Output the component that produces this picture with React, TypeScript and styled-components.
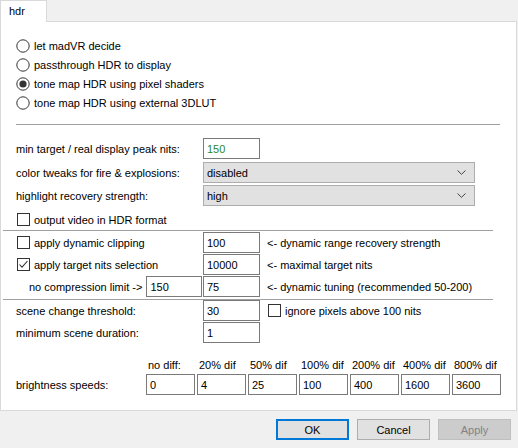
import React from "react";
import styled, { createGlobalStyle, css } from "styled-components";

const GlobalStyle = createGlobalStyle`
  html, body {
    margin: 0;
    padding: 0;
    background: #f0f0f0;
  }
  body {
    font-family: "Liberation Sans", Arial, sans-serif;
    font-size: 11px;
    color: #000;
  }
  * { box-sizing: border-box; }
`;

const Window = styled.div`
  width: 518px;
  height: 448px;
  display: flex;
  flex-direction: column;
  background: #f0f0f0;
  overflow: hidden;
`;

const TabStrip = styled.div`
  height: 21px;
  display: flex;
  align-items: flex-end;
`;

const Tab = styled.div`
  width: 47px;
  height: 22px;
  margin-bottom: -1px;
  position: relative;
  z-index: 1;
  background: #fff;
  border: 1px solid #d9d9d9;
  border-bottom: none;
  padding: 3px 0 0 8px;
  font-size: 11px;
  line-height: 14px;
`;

const Panel = styled.div`
  width: 517px;
  height: 390px;
  background: #fff;
  border: 1px solid #d9d9d9;
  padding-left: 15px;
  display: flex;
  flex-direction: column;
`;

const RadioList = styled.div`
  margin-top: 14px;
  display: flex;
  flex-direction: column;
`;

const OptionRow = styled.div<{ $indent?: number }>`
  height: 19px;
  display: flex;
  align-items: center;
  gap: 4px;
  padding-left: ${(p) => p.$indent ?? 0}px;
  white-space: nowrap;
`;

const Separator = styled.div<{ $wide?: boolean }>`
  height: 1px;
  background: #a0a0a0;
  ${(p) =>
    p.$wide
      ? css`
          margin-left: -13px;
          width: 490px;
        `
      : css`
          width: 484px;
        `}
`;

const FormRow = styled.div<{ $top?: number }>`
  margin-top: ${(p) => p.$top ?? 0}px;
  height: 21px;
  display: grid;
  grid-template-columns: 187px auto 1fr;
  align-items: center;
  white-space: nowrap;
`;

const FieldLabel = styled.div<{ $indent?: number }>`
  display: flex;
  align-items: center;
  padding-left: ${(p) => p.$indent ?? 0}px;
  gap: 4px;
`;

const TextBox = styled.div<{ $width?: number; $green?: boolean }>`
  width: ${(p) => p.$width ?? 57}px;
  height: 21px;
  border: 1px solid #7a7a7a;
  background: #fff;
  padding-left: 3px;
  display: flex;
  align-items: center;
  color: ${(p) => (p.$green ? "#2a8a2a" : "#000")};
`;

const PushRight = styled.div`
  margin-left: auto;
  margin-right: 1px;
`;

const SelectBox = styled.div`
  width: 272px;
  height: 21px;
  border: 1px solid #adadad;
  background: #e1e1e1;
  padding: 0 8px 0 3px;
  display: flex;
  align-items: center;
  justify-content: space-between;
`;

const Hint = styled.div<{ $gap?: number }>`
  padding-left: ${(p) => p.$gap ?? 7}px;
  display: flex;
  align-items: center;
  gap: 4px;
`;

const BoxMark = styled.span`
  width: 13px;
  height: 13px;
  border: 1px solid #333;
  background: #fff;
  flex: none;
  display: inline-flex;
  align-items: center;
  justify-content: center;
`;

const SpeedGrid = styled.div<{ $top?: number; $height: number }>`
  margin-top: ${(p) => p.$top ?? 0}px;
  height: ${(p) => p.$height}px;
  display: grid;
  grid-template-columns: 128px repeat(7, 49px);
  column-gap: 2px;
  align-items: center;
  white-space: nowrap;
`;

const SpeedHead = styled.div`
  padding-left: 2px;
  line-height: 13px;
`;

const SpeedFirst = styled.div`
  margin-right: -2px;
`;

const ButtonBar = styled.div`
  flex: 1;
  display: flex;
  justify-content: flex-end;
  align-items: flex-start;
  gap: 8px;
  padding: 8px 7px 0 0;
`;

const Button = styled.div<{ $variant?: "default" | "normal" | "disabled" }>`
  width: 73px;
  height: 21px;
  display: flex;
  align-items: center;
  justify-content: center;
  background: #e1e1e1;
  border: 1px solid #adadad;
  ${(p) =>
    p.$variant === "default" &&
    css`
      border: 2px solid #0078d7;
    `}
  ${(p) =>
    p.$variant === "disabled" &&
    css`
      background: #cccccc;
      border-color: #bfbfbf;
      color: #838383;
    `}
`;

const Radio = ({ checked }: { checked?: boolean }) => (
  <svg width="14" height="14" viewBox="0 0 14 14" style={{ flex: "none" }}>
    <circle cx="7" cy="7" r="6.2" fill="#fff" stroke="#333" strokeWidth="1" />
    {checked && <circle cx="7" cy="7" r="3.6" fill="#333" />}
  </svg>
);

const Check = ({ checked }: { checked?: boolean }) => (
  <BoxMark>
    {checked && (
      <svg width="11" height="11" viewBox="0 0 11 11">
        <polyline points="1.5,5.5 4,8.2 9.5,2" fill="none" stroke="#333" strokeWidth="1.1" />
      </svg>
    )}
  </BoxMark>
);

const Chevron = () => (
  <svg width="9" height="5" viewBox="0 0 9 5">
    <polyline points="0.5,0.5 4.5,4.3 8.5,0.5" fill="none" stroke="#444" strokeWidth="1" />
  </svg>
);

const radios = [
  { label: "let madVR decide", checked: false },
  { label: "passthrough HDR to display", checked: false },
  { label: "tone map HDR using pixel shaders", checked: true },
  { label: "tone map HDR using external 3DLUT", checked: false },
];

const speeds = [
  { head: "no diff:", value: "0" },
  { head: "20% dif", value: "4" },
  { head: "50% dif", value: "25" },
  { head: "100% dif", value: "100" },
  { head: "200% dif", value: "400" },
  { head: "400% dif", value: "1600" },
  { head: "800% dif", value: "3600" },
];

export default function App() {
  return (
    <>
      <GlobalStyle />
      <Window>
        <TabStrip>
          <Tab>hdr</Tab>
        </TabStrip>
        <Panel>
          <RadioList>
            {radios.map((r) => (
              <OptionRow key={r.label}>
                <Radio checked={r.checked} />
                <span>{r.label}</span>
              </OptionRow>
            ))}
          </RadioList>

          <Separator style={{ marginTop: 12 }} />

          <FormRow $top={13}>
            <FieldLabel>min target / real display peak nits:</FieldLabel>
            <TextBox $green>150</TextBox>
          </FormRow>
          <FormRow $top={3}>
            <FieldLabel>color tweaks for fire &amp; explosions:</FieldLabel>
            <SelectBox>
              <span>disabled</span>
              <Chevron />
            </SelectBox>
          </FormRow>
          <FormRow $top={2}>
            <FieldLabel>highlight recovery strength:</FieldLabel>
            <SelectBox>
              <span>high</span>
              <Chevron />
            </SelectBox>
          </FormRow>
          <OptionRow $indent={1} style={{ marginTop: 4 }}>
            <Check />
            <span>output video in HDR format</span>
          </OptionRow>

          <Separator $wide style={{ marginTop: 1 }} />

          <FormRow $top={1}>
            <FieldLabel $indent={1}>
              <Check />
              <span>apply dynamic clipping</span>
            </FieldLabel>
            <TextBox>100</TextBox>
            <Hint>&lt;- dynamic range recovery strength</Hint>
          </FormRow>
          <FormRow $top={1}>
            <FieldLabel $indent={1}>
              <Check checked />
              <span>apply target nits selection</span>
            </FieldLabel>
            <TextBox>10000</TextBox>
            <Hint>&lt;- maximal target nits</Hint>
          </FormRow>
          <FormRow $top={1}>
            <FieldLabel $indent={13}>
              <span>no compression limit -&gt;</span>
              <PushRight>
                <TextBox $width={56}>150</TextBox>
              </PushRight>
            </FieldLabel>
            <TextBox>75</TextBox>
            <Hint>&lt;- dynamic tuning (recommended 50-200)</Hint>
          </FormRow>

          <Separator $wide style={{ marginTop: 2 }} />

          <FormRow>
            <FieldLabel>scene change threshold:</FieldLabel>
            <TextBox>30</TextBox>
            <Hint $gap={8}>
              <Check />
              <span>ignore pixels above 100 nits</span>
            </Hint>
          </FormRow>
          <FormRow $top={1}>
            <FieldLabel>minimum scene duration:</FieldLabel>
            <TextBox>1</TextBox>
          </FormRow>

          <SpeedGrid $top={16} $height={13}>
            <span />
            {speeds.map((s) => (
              <SpeedHead key={s.head}>{s.head}</SpeedHead>
            ))}
          </SpeedGrid>
          <SpeedGrid $top={2} $height={21}>
            <SpeedFirst>brightness speeds:</SpeedFirst>
            {speeds.map((s) => (
              <TextBox key={s.head} $width={49}>
                {s.value}
              </TextBox>
            ))}
          </SpeedGrid>
        </Panel>
        <ButtonBar>
          <Button $variant="default">OK</Button>
          <Button $variant="normal">Cancel</Button>
          <Button $variant="disabled">Apply</Button>
        </ButtonBar>
      </Window>
    </>
  );
}
